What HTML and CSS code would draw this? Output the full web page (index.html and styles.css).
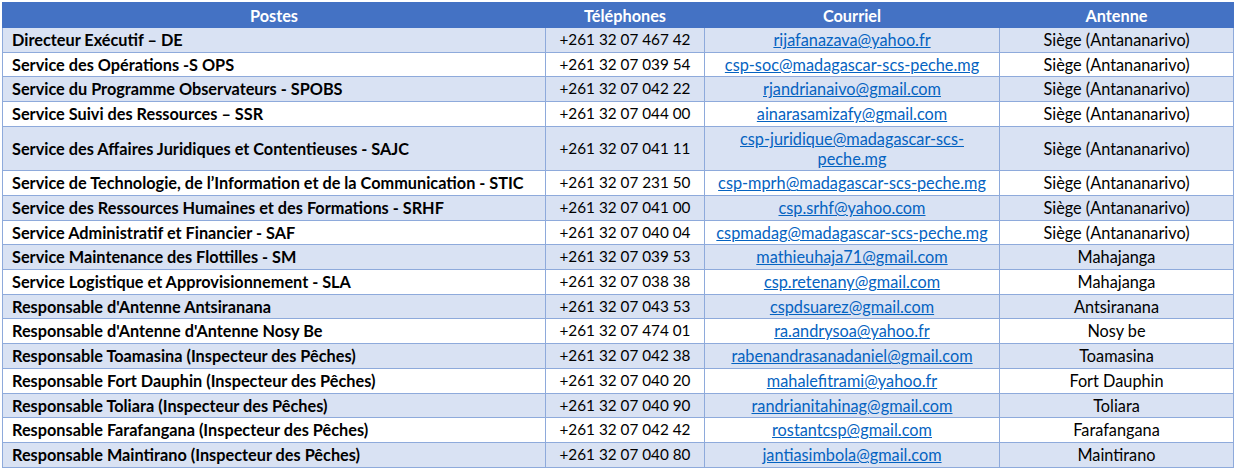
FILE: index.html
```html
<!DOCTYPE html>
<html lang="fr">
<head>
<meta charset="utf-8">
<title>Contacts</title>
<link rel="stylesheet" href="styles.css">
</head>
<body>
<table class="contacts">
  <colgroup>
    <col class="c-poste">
    <col class="c-tel">
    <col class="c-mail">
    <col class="c-ant">
  </colgroup>
  <thead>
    <tr><th>Postes</th><th>Téléphones</th><th>Courriel</th><th>Antenne</th></tr>
  </thead>
  <tbody>
    <tr><td class="poste">Directeur Exécutif – DE</td><td class="tel">+261 32 07 467 42</td><td><a href="#">rijafanazava@yahoo.fr</a></td><td>Siège (Antananarivo)</td></tr>
    <tr><td class="poste">Service des Opérations -S OPS</td><td class="tel">+261 32 07 039 54</td><td><a href="#">csp-soc@madagascar-scs-peche.mg</a></td><td>Siège (Antananarivo)</td></tr>
    <tr><td class="poste">Service du Programme Observateurs - SPOBS</td><td class="tel">+261 32 07 042 22</td><td><a href="#">rjandrianaivo@gmail.com</a></td><td>Siège (Antananarivo)</td></tr>
    <tr><td class="poste">Service Suivi des Ressources – SSR</td><td class="tel">+261 32 07 044 00</td><td><a href="#">ainarasamizafy@gmail.com</a></td><td>Siège (Antananarivo)</td></tr>
    <tr><td class="poste">Service des Affaires Juridiques et Contentieuses - SAJC</td><td class="tel">+261 32 07 041 11</td><td><a href="#">csp-juridique@madagascar-scs-peche.mg</a></td><td>Siège (Antananarivo)</td></tr>
    <tr><td class="poste">Service de Technologie, de l’Information et de la Communication - STIC</td><td class="tel">+261 32 07 231 50</td><td><a href="#">csp-mprh@madagascar-scs-peche.mg</a></td><td>Siège (Antananarivo)</td></tr>
    <tr><td class="poste">Service des Ressources Humaines et des Formations - SRHF</td><td class="tel">+261 32 07 041 00</td><td><a href="#">csp.srhf@yahoo.com</a></td><td>Siège (Antananarivo)</td></tr>
    <tr><td class="poste">Service Administratif et Financier - SAF</td><td class="tel">+261 32 07 040 04</td><td><a href="#">cspmadag@madagascar-scs-peche.mg</a></td><td>Siège (Antananarivo)</td></tr>
    <tr><td class="poste">Service Maintenance des Flottilles - SM</td><td class="tel">+261 32 07 039 53</td><td><a href="#">mathieuhaja71@gmail.com</a></td><td>Mahajanga</td></tr>
    <tr><td class="poste">Service Logistique et Approvisionnement - SLA</td><td class="tel">+261 32 07 038 38</td><td><a href="#">csp.retenany@gmail.com</a></td><td>Mahajanga</td></tr>
    <tr><td class="poste">Responsable d'Antenne Antsiranana</td><td class="tel">+261 32 07 043 53</td><td><a href="#">cspdsuarez@gmail.com</a></td><td>Antsiranana</td></tr>
    <tr><td class="poste">Responsable d'Antenne d'Antenne Nosy Be</td><td class="tel">+261 32 07 474 01</td><td><a href="#">ra.andrysoa@yahoo.fr</a></td><td>Nosy be</td></tr>
    <tr><td class="poste">Responsable Toamasina (Inspecteur des Pêches)</td><td class="tel">+261 32 07 042 38</td><td><a href="#">rabenandrasanadaniel@gmail.com</a></td><td>Toamasina</td></tr>
    <tr><td class="poste">Responsable Fort Dauphin (Inspecteur des Pêches)</td><td class="tel">+261 32 07 040 20</td><td><a href="#">mahalefitrami@yahoo.fr</a></td><td>Fort Dauphin</td></tr>
    <tr><td class="poste">Responsable Toliara (Inspecteur des Pêches)</td><td class="tel">+261 32 07 040 90</td><td><a href="#">randrianitahinag@gmail.com</a></td><td>Toliara</td></tr>
    <tr><td class="poste">Responsable Farafangana (Inspecteur des Pêches)</td><td class="tel">+261 32 07 042 42</td><td><a href="#">rostantcsp@gmail.com</a></td><td>Farafangana</td></tr>
    <tr><td class="poste">Responsable Maintirano (Inspecteur des Pêches)</td><td class="tel">+261 32 07 040 80</td><td><a href="#">jantiasimbola@gmail.com</a></td><td>Maintirano</td></tr>
  </tbody>
</table>
</body>
</html>
```

FILE: styles.css
```css
html, body {
  margin: 0;
  padding: 0;
  background: #ffffff;
}

body {
  font-family: Lato, "Open Sans", "Liberation Sans", sans-serif;
  font-size: 16.3px;
  color: #000000;
}

.contacts {
  border-collapse: collapse;
  table-layout: fixed;
  width: 1231px;
  margin: 2px 0 0 2px;
}

.c-poste { width: 543px; }
.c-tel { width: 159px; }
.c-mail { width: 295px; }
.c-ant { width: 234px; }

.contacts th {
  background: #4472c4;
  color: #ffffff;
  font-weight: 700;
  text-align: center;
  height: 24px;
  padding: 0 6px;
  line-height: 19px;
  border: 1px solid #4472c4;
}

.contacts td {
  border: 1px solid #8eaadb;
  text-align: center;
  vertical-align: middle;
  line-height: 19.7px;
  padding: 2px 8px;
}

.contacts td.tel {
  font-size: 15.3px;
}

.contacts tbody tr:nth-child(odd) td {
  background: #d9e2f3;
}

.contacts tbody tr:nth-child(even) td {
  background: #ffffff;
}

.contacts td.poste {
  text-align: left;
  font-weight: 700;
  padding-left: 9px;
}

.contacts a {
  color: #0563c1;
  text-decoration: underline;
}
```
